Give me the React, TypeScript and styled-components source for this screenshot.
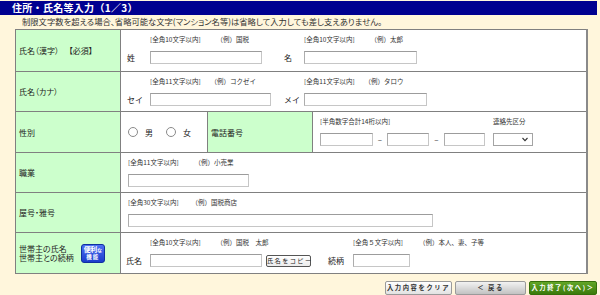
import styled, { createGlobalStyle } from "styled-components";

const GlobalStyle = createGlobalStyle`
  html, body {
    margin: 0;
    padding: 0;
    background: #fff6dc;
  }
  body {
    font-family: "Noto Sans CJK JP", "DejaVu Sans", sans-serif;
    color: #222;
  }
`;

const Page = styled.div`
  width: 600px;
  height: 295px;
  overflow: hidden;
  background: #fff6dc;
`;

const TitleBar = styled.h1`
  margin: 1px 3px 0 0;
  height: 14px;
  padding-left: 12px;
  background: #000090;
  color: #fff;
  font-size: 10px;
  font-weight: 700;
  line-height: 14px;
  letter-spacing: 0.3px;
`;

const Notice = styled.p`
  margin: 0 0 1px;
  padding-left: 22px;
  height: 13px;
  font-size: 8.3px;
  line-height: 13px;
  color: #333;
  font-feature-settings: "palt";
  white-space: nowrap;
`;

const FormTable = styled.table`
  margin-left: 15px;
  width: 571px;
  border-collapse: collapse;
  table-layout: fixed;
  border: 1px solid #7a7a7a;
  border-right: 2px solid #8a8a8a;
`;

const Col = styled.col<{ $w: number }>`
  width: ${(p) => p.$w}px;
`;

const Row = styled.tr<{ $h: number }>`
  height: ${(p) => p.$h}px;

  & > th,
  & > td {
    border: 1px solid #808080;
  }
`;

const Head = styled.th`
  background: #ccffcc;
  padding: 0 3px;
  text-align: left;
  font-weight: 400;
  font-size: 8px;
  vertical-align: middle;
  font-feature-settings: "palt";
  white-space: nowrap;
`;

const Cell = styled.td<{ $pad?: number; $center?: boolean }>`
  background: #fff;
  padding: ${(p) => (p.$center ? "0" : "4px")} 0 0 ${(p) => p.$pad ?? 7}px;
  vertical-align: ${(p) => (p.$center ? "middle" : "top")};
`;

const Hint = styled.div<{ $gap?: number }>`
  display: flex;
  gap: ${(p) => p.$gap ?? 16}px;
  font-size: 6.5px;
  line-height: 10px;
  color: #333;
  white-space: nowrap;
`;

const Pair = styled.div<{ $first: number }>`
  display: grid;
  grid-template-columns: ${(p) => p.$first}px auto;
`;

const Group = styled.div<{ $label: number }>`
  display: grid;
  grid-template-columns: ${(p) => p.$label}px auto;
  grid-template-rows: 10px 13px;
  row-gap: 7px;
  align-items: center;

  & > ${Hint} {
    grid-column: 2;
  }
`;

const Stack = styled.div`
  display: grid;
  grid-template-rows: 10px 13px;
  row-gap: 7px;
  align-items: center;
`;

const FieldLabel = styled.label`
  font-size: 8px;
  line-height: 13px;
  white-space: nowrap;
`;

const Controls = styled.div`
  display: flex;
  align-items: center;
`;

const TextInput = styled.input.attrs({ type: "text" })<{ $w: number }>`
  display: block;
  width: ${(p) => p.$w}px;
  height: 13px;
  box-sizing: border-box;
  margin: 0;
  padding: 0;
  background: #fff;
  border: 1px solid #c6c6c6;
  border-top-color: #9c9c9c;
  border-left-color: #adadad;
`;

const CopyButton = styled.button`
  margin-left: 4px;
  width: 45px;
  height: 12px;
  padding: 0;
  box-sizing: border-box;
  background: linear-gradient(#ffffff, #ececec);
  border: 1px solid #555;
  border-radius: 2px;
  font-family: inherit;
  font-size: 6.2px;
  letter-spacing: 1.4px;
  color: #222;
  line-height: 10px;
  white-space: nowrap;
`;

const RadioGroup = styled.div`
  display: flex;
  align-items: center;
  gap: 13px;
`;

const RadioOption = styled.label`
  display: flex;
  align-items: center;
  gap: 7px;
  font-size: 8px;
`;

const Radio = styled.input.attrs({ type: "radio" })`
  appearance: none;
  margin: 0;
  width: 10px;
  height: 10px;
  box-sizing: border-box;
  border: 1px solid #8a8a8a;
  border-radius: 50%;
  background: #fff;
`;

const PhoneGrid = styled.div`
  display: grid;
  grid-template-columns: 53px 14px 42px 15px 41px 8px 40px;
  grid-template-rows: 10px 13px;
  row-gap: 7px;
  align-items: center;
`;

const PhoneHint = styled(Hint)`
  grid-column: 1 / 6;
`;

const ContactHint = styled(Hint)`
  grid-column: 7;
`;

const Dash = styled.span`
  text-align: center;
  font-size: 8px;
  line-height: 13px;
  color: #333;
`;

const SelectBox = styled.div`
  grid-column: 7;
  grid-row: 2;
  position: relative;
  width: 40px;
  height: 13px;
`;

const Select = styled.select`
  display: block;
  appearance: none;
  width: 100%;
  height: 100%;
  margin: 0;
  padding: 0;
  box-sizing: border-box;
  background: #fff;
  border: 1px solid #a4a4a4;
  border-radius: 0;
`;

const Chevron = styled.svg`
  position: absolute;
  right: 5px;
  top: 4px;
  width: 6px;
  height: 5px;
  pointer-events: none;
`;

const HeadInner = styled.div`
  display: flex;
  align-items: center;
  gap: 7px;
`;

const HeadLines = styled.div`
  line-height: 9.5px;
`;

const Badge = styled.span`
  display: inline-flex;
  flex-direction: column;
  align-items: center;
  justify-content: center;
  width: 24px;
  height: 19px;
  box-sizing: border-box;
  border-radius: 3px;
  background: linear-gradient(#4d70f2, #1b3ccc);
  border: 1px solid #102fa0;
  color: #fff;
  font-weight: 700;
`;

const BadgeTop = styled.span`
  font-size: 7px;
  line-height: 8px;
  letter-spacing: -0.3px;

  & small {
    font-size: 5px;
  }
`;

const BadgeBottom = styled.span`
  font-size: 5.5px;
  line-height: 7px;
  letter-spacing: 1px;
`;

const Actions = styled.div`
  display: flex;
  justify-content: flex-end;
  gap: 3px;
  margin: 7px 3px 0 0;
`;

type Variant = "light" | "gray" | "green";

const variantStyles: Record<Variant, string> = {
  light: "background: linear-gradient(#ffffff, #e2e2e2); border-color: #9a9a9a; color: #333;",
  gray: "background: linear-gradient(#f2f2f2, #c2c2c2); border-color: #9a9a9a; color: #333;",
  green: "background: linear-gradient(#62a627, #3a7a0b); border-color: #356f0a; color: #fff;",
};

const ActionButton = styled.button<{ $variant: Variant; $w: number }>`
  width: ${(p) => p.$w}px;
  height: 14px;
  padding: 0;
  box-sizing: border-box;
  border: 1px solid;
  border-radius: 2px;
  font-family: inherit;
  font-size: 6.3px;
  font-weight: 700;
  letter-spacing: 1.6px;
  line-height: 12px;
  white-space: nowrap;
  ${(p) => variantStyles[p.$variant]}
`;

export default function App() {
  return (
    <Page>
      <GlobalStyle />
      <TitleBar>住所・氏名等入力（1／3）</TitleBar>
      <Notice>
        制限文字数を超える場合、省略可能な文字(マンション名等)は省略して入力しても差し支えありません。
      </Notice>
      <FormTable>
        <colgroup>
          <Col $w={105} />
          <Col $w={87} />
          <Col $w={105} />
          <Col $w={274} />
        </colgroup>
        <tbody>
          <Row $h={42}>
            <Head>氏名（漢字）　 【必須】</Head>
            <Cell colSpan={3} $pad={6}>
              <Pair $first={157}>
                <Group $label={23}>
                  <Hint>
                    <span>[全角10文字以内]</span>
                    <span>（例）国税</span>
                  </Hint>
                  <FieldLabel>姓</FieldLabel>
                  <Controls>
                    <TextInput $w={112} />
                  </Controls>
                </Group>
                <Group $label={20}>
                  <Hint>
                    <span>[全角10文字以内]</span>
                    <span>（例）太郎</span>
                  </Hint>
                  <FieldLabel>名</FieldLabel>
                  <Controls>
                    <TextInput $w={113} />
                  </Controls>
                </Group>
              </Pair>
            </Cell>
          </Row>
          <Row $h={40}>
            <Head>氏名（カナ）</Head>
            <Cell colSpan={3} $pad={6}>
              <Pair $first={157}>
                <Group $label={23}>
                  <Hint $gap={10}>
                    <span>[全角11文字以内]</span>
                    <span>（例）コクゼイ</span>
                  </Hint>
                  <FieldLabel>セイ</FieldLabel>
                  <Controls>
                    <TextInput $w={121} />
                  </Controls>
                </Group>
                <Group $label={20}>
                  <Hint $gap={10}>
                    <span>[全角11文字以内]</span>
                    <span>（例）タロウ</span>
                  </Hint>
                  <FieldLabel>メイ</FieldLabel>
                  <Controls>
                    <TextInput $w={123} />
                  </Controls>
                </Group>
              </Pair>
            </Cell>
          </Row>
          <Row $h={41}>
            <Head>性別</Head>
            <Cell $center>
              <RadioGroup>
                <RadioOption>
                  <Radio name="sex" />男
                </RadioOption>
                <RadioOption>
                  <Radio name="sex" />女
                </RadioOption>
              </RadioGroup>
            </Cell>
            <Head>電話番号</Head>
            <Cell>
              <PhoneGrid>
                <PhoneHint>
                  <span>[半角数字合計14桁以内]</span>
                </PhoneHint>
                <ContactHint>
                  <span>連絡先区分</span>
                </ContactHint>
                <TextInput $w={53} />
                <Dash>–</Dash>
                <TextInput $w={42} />
                <Dash>–</Dash>
                <TextInput $w={41} />
                <SelectBox>
                  <Select>
                    <option></option>
                  </Select>
                  <Chevron viewBox="0 0 6 5">
                    <path d="M0.5 1 L3 3.6 L5.5 1" fill="none" stroke="#333" strokeWidth="1.1" />
                  </Chevron>
                </SelectBox>
              </PhoneGrid>
            </Cell>
          </Row>
          <Row $h={40}>
            <Head>職業</Head>
            <Cell colSpan={3}>
              <Stack>
                <Hint>
                  <span>[全角11文字以内]</span>
                  <span>（例）小売業</span>
                </Hint>
                <TextInput $w={121} />
              </Stack>
            </Cell>
          </Row>
          <Row $h={40}>
            <Head>屋号・雅号</Head>
            <Cell colSpan={3}>
              <Stack>
                <Hint $gap={13}>
                  <span>[全角30文字以内]</span>
                  <span>（例）国税商店</span>
                </Hint>
                <TextInput $w={305} />
              </Stack>
            </Cell>
          </Row>
          <Row $h={41}>
            <Head>
              <HeadInner>
                <HeadLines>
                  世帯主の氏名
                  <br />
                  世帯主との続柄
                </HeadLines>
                <Badge>
                  <BadgeTop>
                    便利<small>な</small>
                  </BadgeTop>
                  <BadgeBottom>機能</BadgeBottom>
                </Badge>
              </HeadInner>
            </Head>
            <Cell colSpan={3} $pad={5}>
              <Pair $first={202}>
                <Group $label={24}>
                  <Hint>
                    <span>[全角10文字以内]</span>
                    <span>（例）国税　太郎</span>
                  </Hint>
                  <FieldLabel>氏名</FieldLabel>
                  <Controls>
                    <TextInput $w={112} />
                    <CopyButton type="button">氏名をコピー</CopyButton>
                  </Controls>
                </Group>
                <Group $label={25}>
                  <Hint>
                    <span>[全角５文字以内]</span>
                    <span>（例）本人、妻、子等</span>
                  </Hint>
                  <FieldLabel>続柄</FieldLabel>
                  <Controls>
                    <TextInput $w={57} />
                  </Controls>
                </Group>
              </Pair>
            </Cell>
          </Row>
        </tbody>
      </FormTable>
      <Actions>
        <ActionButton type="button" $variant="light" $w={67}>
          入力内容をクリア
        </ActionButton>
        <ActionButton type="button" $variant="gray" $w={71}>
          ＜ 戻る
        </ActionButton>
        <ActionButton type="button" $variant="green" $w={68}>
          入力終了(次へ)＞
        </ActionButton>
      </Actions>
    </Page>
  );
}
